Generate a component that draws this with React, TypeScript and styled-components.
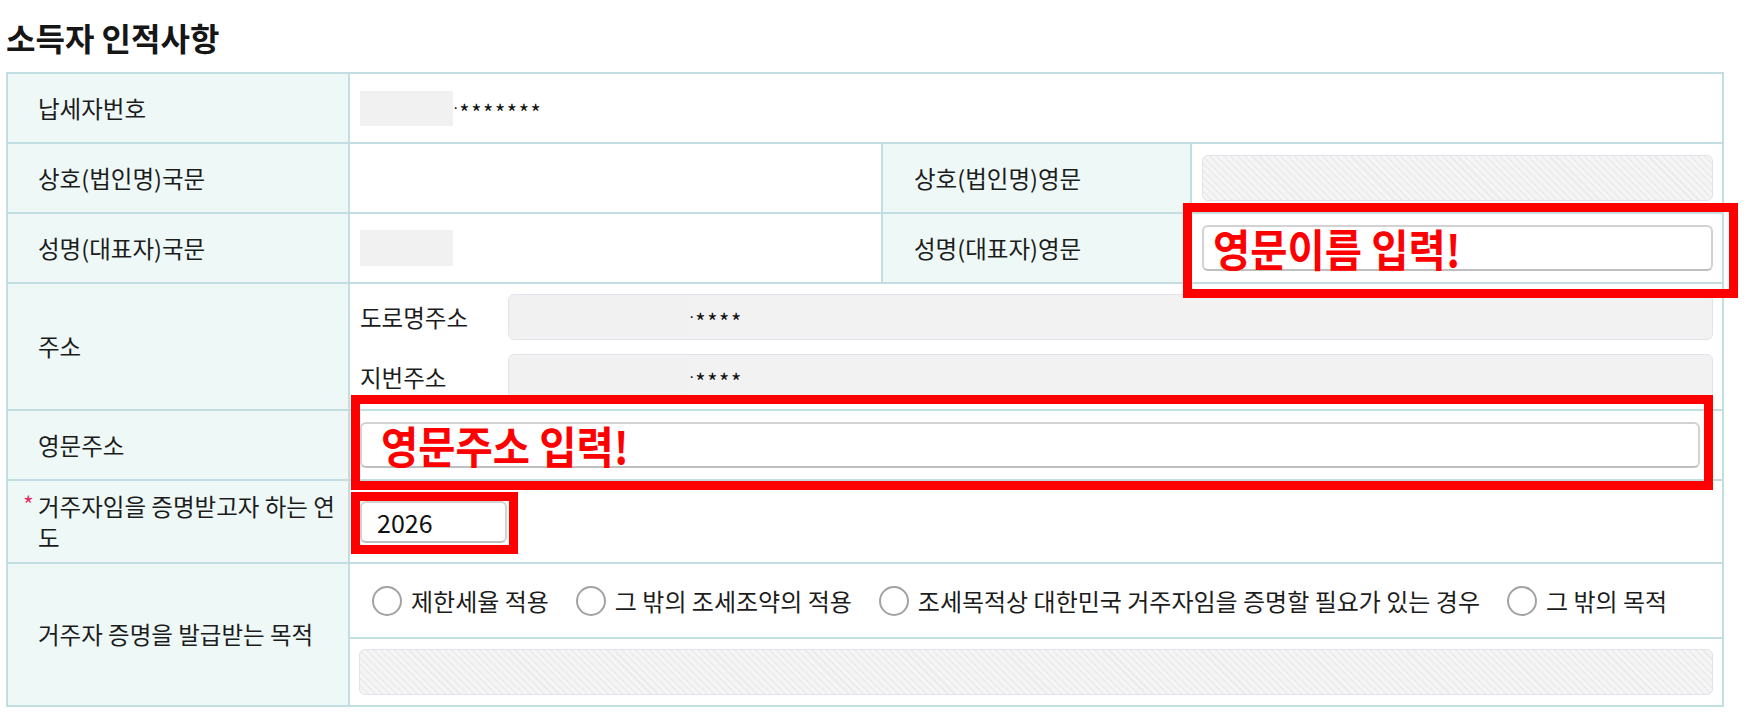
import React from "react";
import styled, { createGlobalStyle } from "styled-components";

const FONT = `"Noto Sans CJK KR", "Noto Sans", sans-serif`;
const LINE = "#c3dee1";
const MINT = "#eef8f7";

const Global = createGlobalStyle`
  html, body { margin: 0; padding: 0; background: #fff; }
  body { font-family: ${FONT}; color: #1c1c1c; }
`;

const Page = styled.div`
  width: 1748px;
  box-sizing: border-box;
  padding: 15px 24px 0 6px;
`;

const Title = styled.h2`
  margin: 0 0 12px;
  font-size: 32px;
  line-height: 45px;
  font-weight: 700;
  color: #161616;
`;

const Table = styled.div`
  display: grid;
  grid-template-columns: 340px 531px 307px 1fr;
  grid-template-rows: 68px 68px 68px 125px 68px 81px 141px;
  gap: 2px;
  padding: 2px;
  width: 1718px;
  box-sizing: border-box;
  background: ${LINE};
`;

const Label = styled.div<{ $pl?: number }>`
  background: ${MINT};
  display: flex;
  align-items: center;
  padding: 0 8px 0 ${(p) => p.$pl ?? 30}px;
  font-size: 23.5px;
  line-height: 31px;
  word-break: break-all;
  color: #1c1c1c;
`;

const Required = styled.span`
  display: inline-block;
  width: 15px;
  margin-left: -15px;
  color: #e0306a;
  font-size: 23px;
  line-height: 1;
  vertical-align: 2px;
`;

const Cell = styled.div<{ $span?: number; $col?: boolean; $pr?: number; $flush?: boolean }>`
  background: #fff;
  grid-column: span ${(p) => p.$span ?? 1};
  display: flex;
  flex-direction: ${(p) => (p.$col ? "column" : "row")};
  align-items: ${(p) => (p.$col ? "stretch" : "center")};
  justify-content: center;
  padding: ${(p) => (p.$flush ? "0" : `0 ${p.$pr ?? 9}px 0 10px`)};
  min-width: 0;
  font-size: 23.5px;
`;

const Masked = styled.span<{ $w: number; $h: number }>`
  display: inline-block;
  width: ${(p) => p.$w}px;
  height: ${(p) => p.$h}px;
  background: #f1f1f1;
  flex: none;
`;

const Stars = styled.span`
  font-size: 22px;
  letter-spacing: 1.6px;
  line-height: 1;
  margin-top: 8px;
  color: #111;
  white-space: nowrap;
`;

const Dot = styled.span`
  font-family: "Liberation Sans", Arial, sans-serif;
  font-size: 16px;
  letter-spacing: 0;
  margin-right: 1px;
  position: relative;
  top: -8px;
`;

const Row = styled.div`
  display: flex;
  align-items: center;
  width: 100%;
`;

const Disabled = styled.div<{ $hatch?: boolean }>`
  flex: 1;
  height: 46px;
  box-sizing: border-box;
  border: 1px solid #e2e2ea;
  border-radius: 6px;
  background: ${(p) =>
    p.$hatch
      ? "repeating-linear-gradient(45deg, #ebebeb 0px, #ebebeb 1.5px, #f5f5f5 1.5px, #f5f5f5 5px)"
      : "#f2f2f2"};
  display: flex;
  align-items: center;
  color: #111;
`;

const AddrBlock = styled.div`
  display: flex;
  flex-direction: column;
  gap: 14px;
  padding: 10px 0 9px;
`;

const SubLabel = styled.span`
  width: 148px;
  flex: none;
  font-size: 23.5px;
  color: #1c1c1c;
`;

const TextBox = styled.div<{ $w?: number; $h?: number; $pl?: number; $fs?: number }>`
  position: relative;
  ${(p) => (p.$w ? `width: ${p.$w}px;` : "flex: 1;")}
  height: ${(p) => p.$h ?? 46}px;
  box-sizing: border-box;
  border: 2px solid #d2d2d2;
  border-bottom-color: #bfbfbf;
  border-radius: 6px;
  background: #fff;
  display: flex;
  align-items: center;
  padding-left: ${(p) => p.$pl ?? 12}px;
  font-size: ${(p) => p.$fs ?? 23.5}px;
  color: #111;
`;

const Marker = styled.div<{ $t: number; $r: number; $b: number; $l: number }>`
  position: absolute;
  top: ${(p) => p.$t}px;
  right: ${(p) => p.$r}px;
  bottom: ${(p) => p.$b}px;
  left: ${(p) => p.$l}px;
  border: 9px solid #ff0000;
  pointer-events: none;
`;

const Note = styled.span`
  display: inline-block;
  color: #ff0000;
  font-size: 44px;
  font-weight: 700;
  line-height: 1;
  white-space: nowrap;
  transform: scaleX(0.92);
  transform-origin: left center;
`;

const RadioRow = styled.div`
  height: 73px;
  display: flex;
  align-items: center;
  gap: 27px;
  padding-left: 22px;
  border-bottom: 2px solid ${LINE};
`;

const RadioItem = styled.label`
  display: flex;
  align-items: center;
  gap: 9px;
  font-size: 24px;
  color: #1c1c1c;
  white-space: nowrap;
`;

const RadioCircle = styled.span`
  width: 30px;
  height: 30px;
  flex: none;
  box-sizing: border-box;
  border-radius: 50%;
  border: 2px solid #a2a2a2;
  background: #fff;
`;

const InputRow = styled.div`
  flex: 1;
  display: flex;
  align-items: center;
  padding: 0 9px;
`;

const purposes = [
  "제한세율 적용",
  "그 밖의 조세조약의 적용",
  "조세목적상 대한민국 거주자임을 증명할 필요가 있는 경우",
  "그 밖의 목적",
];

export default function App() {
  return (
    <Page>
      <Global />
      <Title>소득자 인적사항</Title>
      <Table>
        <Label>납세자번호</Label>
        <Cell $span={3}>
          <Row>
            <Masked $w={93} $h={35} />
            <Stars>
              <Dot>·</Dot>*******
            </Stars>
          </Row>
        </Cell>

        <Label>상호(법인명)국문</Label>
        <Cell />
        <Label $pl={31}>상호(법인명)영문</Label>
        <Cell>
          <Disabled $hatch />
        </Cell>

        <Label>성명(대표자)국문</Label>
        <Cell>
          <Row>
            <Masked $w={93} $h={36} />
          </Row>
        </Cell>
        <Label $pl={31}>성명(대표자)영문</Label>
        <Cell>
          <TextBox $pl={9}>
            <Note>영문이름 입력!</Note>
            <Marker $t={-24} $r={-27} $b={-29} $l={-21} />
          </TextBox>
        </Cell>

        <Label>주소</Label>
        <Cell $span={3} $col>
          <AddrBlock>
            <Row>
              <SubLabel>도로명주소</SubLabel>
              <Disabled>
                <Masked $w={180} $h={40} />
                <Stars>
                  <Dot>·</Dot>****
                </Stars>
              </Disabled>
            </Row>
            <Row>
              <SubLabel>지번주소</SubLabel>
              <Disabled>
                <Masked $w={180} $h={40} />
                <Stars>
                  <Dot>·</Dot>****
                </Stars>
              </Disabled>
            </Row>
          </AddrBlock>
        </Cell>

        <Label>영문주소</Label>
        <Cell $span={3} $pr={22}>
          <TextBox $pl={19}>
            <Note>영문주소 입력!</Note>
            <Marker $t={-29} $r={-15} $b={-24} $l={-11} />
          </TextBox>
        </Cell>

        <Label>
          <span>
            <Required>*</Required>거주자임을 증명받고자 하는 연도
          </span>
        </Label>
        <Cell $span={3}>
          <Row>
            <TextBox $w={147} $h={42} $pl={15} $fs={25}>
              2026
              <Marker $t={-11} $r={-13} $b={-13} $l={-11} />
            </TextBox>
          </Row>
        </Cell>

        <Label>거주자 증명을 발급받는 목적</Label>
        <Cell $span={3} $col $flush>
          <RadioRow>
            {purposes.map((p) => (
              <RadioItem key={p}>
                <RadioCircle />
                {p}
              </RadioItem>
            ))}
          </RadioRow>
          <InputRow>
            <Disabled $hatch />
          </InputRow>
        </Cell>
      </Table>
    </Page>
  );
}
